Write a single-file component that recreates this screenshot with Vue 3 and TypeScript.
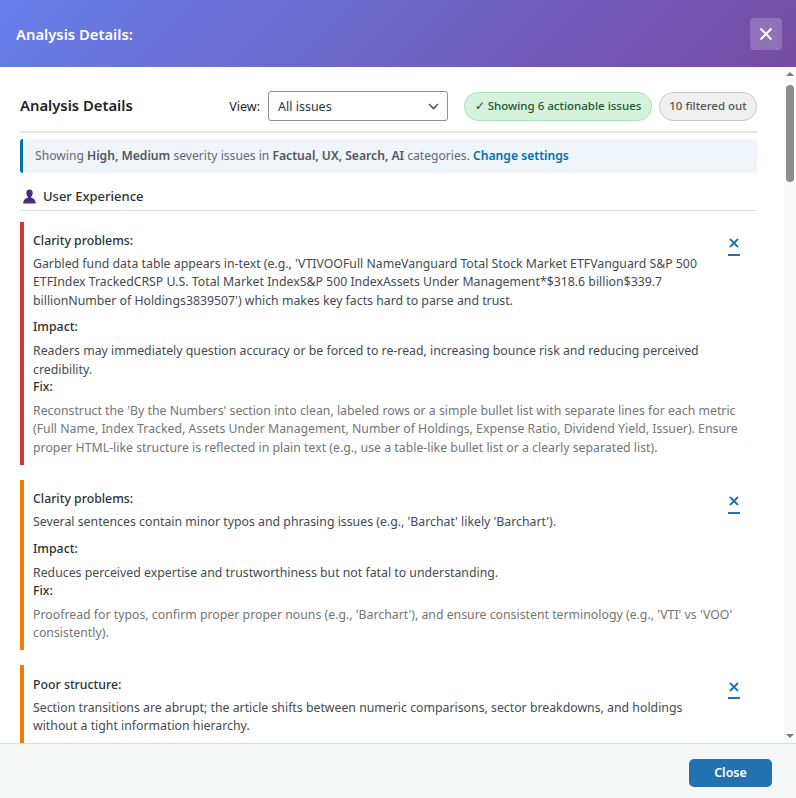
<script setup lang="ts">
interface Issue {
  color: string
  title: string
  text: string
  impact?: string
  fix?: string
}
const issues: Issue[] = [
  {
    color: '#d63638',
    title: 'Clarity problems:',
    text: "Garbled fund data table appears in-text (e.g., 'VTIVOOFull NameVanguard Total Stock Market ETFVanguard S&P 500 ETFIndex TrackedCRSP U.S. Total Market IndexS&P 500 IndexAssets Under Management*$318.6 billion$339.7 billionNumber of Holdings3839507') which makes key facts hard to parse and trust.",
    impact: 'Readers may immediately question accuracy or be forced to re-read, increasing bounce risk and reducing perceived credibility.',
    fix: "Reconstruct the 'By the Numbers' section into clean, labeled rows or a simple bullet list with separate lines for each metric (Full Name, Index Tracked, Assets Under Management, Number of Holdings, Expense Ratio, Dividend Yield, Issuer). Ensure proper HTML-like structure is reflected in plain text (e.g., use a table-like bullet list or a clearly separated list).",
  },
  {
    color: '#f57c00',
    title: 'Clarity problems:',
    text: "Several sentences contain minor typos and phrasing issues (e.g., 'Barchat' likely 'Barchart').",
    impact: 'Reduces perceived expertise and trustworthiness but not fatal to understanding.',
    fix: "Proofread for typos, confirm proper proper nouns (e.g., 'Barchart'), and ensure consistent terminology (e.g., 'VTI' vs 'VOO' consistently).",
  },
  {
    color: '#f57c00',
    title: 'Poor structure:',
    text: 'Section transitions are abrupt; the article shifts between numeric comparisons, sector breakdowns, and holdings without a tight information hierarchy.',
  },
]
</script>

<template>
  <div class="modal">
    <header class="top">
      <h2 class="top-title">Analysis Details:</h2>
      <button class="top-close" aria-label="Close">
        <svg width="14" height="14" viewBox="0 0 14 14">
          <path d="M1.5 1.5 12.5 12.5M12.5 1.5 1.5 12.5" stroke="#fff" stroke-width="2" fill="none" />
        </svg>
      </button>
    </header>

    <div class="middle">
      <main class="content">
        <div class="toolbar">
          <h3 class="heading">Analysis Details</h3>
          <div class="controls">
            <span class="view-label">View:</span>
            <div class="select">
              <span>All issues</span>
              <svg width="11" height="7" viewBox="0 0 11 7">
                <path d="M1 1 5.5 5.5 10 1" stroke="#50575e" stroke-width="1.6" fill="none" />
              </svg>
            </div>
            <span class="pill green">✓ Showing 6 actionable issues</span>
            <span class="pill grey">10 filtered out</span>
          </div>
        </div>

        <div class="notice">
          Showing <b>High, Medium</b> severity issues in <b>Factual, UX, Search, AI</b> categories.
          <a class="link">Change settings</a>
        </div>

        <div class="section">
          <svg width="15" height="15" viewBox="0 0 15 15">
            <path d="M7.5 0.5C5.4 0.5 4.3 2 4.3 4c0 1.5.6 2.9 1.5 3.7v1.1C3.6 9.5 1.6 10.4 1.2 14.5h12.6c-.4-4.1-2.4-5-4.6-5.7V7.7c.9-.8 1.5-2.2 1.5-3.7 0-2-1.1-3.5-3.2-3.5z" fill="#4e2a84" />
          </svg>
          <span>User Experience</span>
        </div>

        <article v-for="(issue, i) in issues" :key="i" class="card" :style="{ borderLeftColor: issue.color }">
          <div class="card-head">
            <div class="card-main">
              <div class="label first">{{ issue.title }}</div>
              <p class="desc">{{ issue.text }}</p>
            </div>
            <button class="dismiss" aria-label="Dismiss">
              <svg width="10" height="10" viewBox="0 0 10 10">
                <path d="M1 1 9 9M9 1 1 9" stroke="#2271b1" stroke-width="1.8" fill="none" />
              </svg>
            </button>
          </div>
          <template v-if="issue.impact">
            <div class="label">Impact:</div>
            <p class="desc tight">{{ issue.impact }}</p>
          </template>
          <template v-if="issue.fix">
            <div class="label fix">Fix:</div>
            <p class="desc muted">{{ issue.fix }}</p>
          </template>
        </article>
      </main>

      <div class="scrollbar">
        <svg class="arrow" width="12" height="8" viewBox="0 0 12 8"><path d="M6 2 10 6H2z" fill="#7d7d7d" /></svg>
        <div class="track"><div class="thumb"></div></div>
        <svg class="arrow" width="12" height="8" viewBox="0 0 12 8"><path d="M2 2h8L6 6z" fill="#7d7d7d" /></svg>
      </div>
    </div>

    <footer class="bottom">
      <button class="close-btn">Close</button>
    </footer>
  </div>
</template>

<style>
html, body { margin: 0; height: 100%; overflow: hidden; background: #fff; }
</style>

<style scoped>
.modal {
  width: 796px;
  height: 798px;
  display: flex;
  flex-direction: column;
  font-family: "Noto Sans", sans-serif;
  font-size: 12.3px;
  color: #444b50;
  overflow: hidden;
  background: #fff;
}
.top {
  height: 67px;
  flex: none;
  display: flex;
  align-items: center;
  justify-content: space-between;
  padding: 0 14px 0 16px;
  box-sizing: border-box;
  background: linear-gradient(135deg, #667eea 0%, #764ba2 100%);
}
.top-title { margin: 0; font-size: 14.8px; font-weight: 600; color: #fff; }
.top-close {
  width: 32px; height: 32px; padding: 0; border: 0; border-radius: 4px;
  background: rgba(255,255,255,0.2);
  display: flex; align-items: center; justify-content: center;
}
.middle { flex: 1; min-height: 0; display: flex; }
.content {
  flex: 1; min-width: 0; overflow: hidden;
  padding: 24px 27px 0 20px;
}
.toolbar {
  display: flex; align-items: center; justify-content: space-between;
  height: 30px; padding-bottom: 10px;
  border-bottom: 2px solid #e5e5e5;
}
.heading { margin: 0 0 2px; font-size: 14.8px; font-weight: 600; color: #1d2327; }
.controls { display: flex; align-items: center; }
.view-label { font-size: 12.5px; color: #1d2327; margin-right: 8px; }
.select {
  width: 180px; height: 30px; box-sizing: border-box;
  border: 1px solid #8c8f94; border-radius: 3px;
  padding: 0 8px 0 9px; margin-right: 16px;
  display: flex; align-items: center; justify-content: space-between;
  font-size: 12.5px; color: #2c3338;
}
.pill {
  height: 29px; box-sizing: border-box; border-radius: 14px; padding-bottom: 2px;
  display: flex; align-items: center; font-size: 11.5px; font-weight: 500;
}
.green { background: #d5f3dc; border: 1px solid #b0e3bd; color: #1e5631; width: 188px; margin-right: 7px; justify-content: center; white-space: nowrap; }
.grey { background: #f0f0f0; border: 1px solid #c8c8c8; color: #555; width: 98px; justify-content: center; white-space: nowrap; }
.notice {
  margin-top: 6px;
  height: 34px; box-sizing: border-box;
  display: block; line-height: 34px;
  padding-left: 12px;
  border-left: 3px solid #0073aa; border-radius: 3px;
  background: #f0f4fb; color: #646970; font-size: 12.14px;
  white-space: nowrap;
}
.notice b { font-weight: 600; color: #50575e; }
.link { color: #0073aa; font-weight: 600; }
.section {
  display: flex; align-items: center; gap: 6px;
  height: 31px; box-sizing: border-box; padding: 2px 0 0 2px; margin-top: 7px;
  border-bottom: 1px solid #dcdcde;
  font-size: 13px; font-weight: 500; color: #2c3338;
}
.card {
  margin-top: 10.6px; margin-bottom: 15px; min-height: 100px;
  border-left: 4px solid #d63638;
  padding: 10.5px 12px 8px 9px;
}
.card + .card { margin-top: 0; }
.card-head { display: flex; justify-content: space-between; align-items: flex-start; }
.card-main { width: 680px; flex: none; }
.label { font-weight: 500; color: #2c3338; line-height: 18px; margin-top: 8.5px; margin-bottom: 6px; }
.label.first { margin-top: 0; margin-bottom: 5px; }
.label.fix { margin-top: -1px; }
.desc { margin: 0; line-height: 18.3px; }
.desc.muted { color: #757575; margin-bottom: 0; }
.dismiss {
  padding: 0 1px 4px; height: 19px; margin: 4.5px 5px 0 0; background: none; border: 0;
  border-bottom: 2px solid #2271b1; flex: none;
  display: flex; align-items: center; justify-content: center;
}
.scrollbar {
  width: 12px; flex: none; background: #f9f9f9;
  display: flex; flex-direction: column; align-items: center;
}
.arrow { flex: none; margin: 3px 0; }
.track { flex: 1; width: 100%; padding-top: 4px; box-sizing: border-box; }
.thumb { width: 8px; height: 97px; margin: 0 auto; background: #8c8c8c; border-radius: 4px; }
.bottom {
  height: 55px; flex: none; box-sizing: border-box;
  border-top: 1px solid #dcdcde; background: #f5f7f7;
  display: flex; align-items: center; justify-content: flex-end;
  padding: 3px 24px 0 0;
}
.close-btn {
  width: 83px; height: 28px; padding: 0; border: 0; border-radius: 5px;
  background: #2271b1; color: #fff;
  font-family: inherit; font-size: 12.5px; font-weight: 600;
}
</style>
